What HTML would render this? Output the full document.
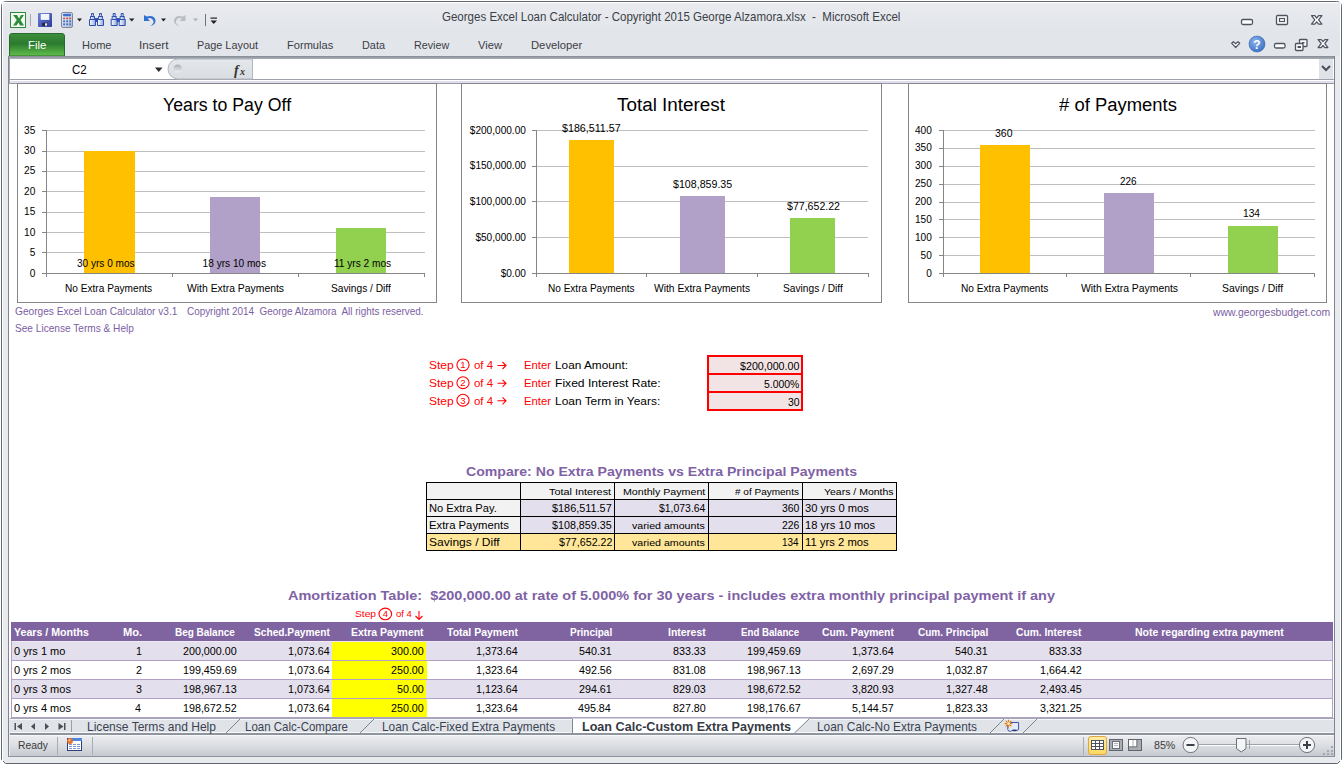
<!DOCTYPE html>
<html><head><meta charset="utf-8">
<style>
html,body{margin:0;padding:0;}
body{width:1343px;height:765px;overflow:hidden;position:relative;background:#ffffff;font-family:"Liberation Sans",sans-serif;}
.t{position:absolute;line-height:0;white-space:pre;transform-origin:0 0;}
svg{position:absolute;left:0;top:0;}
</style></head><body>
<svg width="1343" height="765" viewBox="0 0 1343 765">
<defs>
 <linearGradient id="gTitle" x1="0" y1="0" x2="0" y2="1"><stop offset="0" stop-color="#e9ebef"/><stop offset="1" stop-color="#e2e5ea"/></linearGradient>
 <linearGradient id="gFile" x1="0" y1="0" x2="0" y2="1"><stop offset="0" stop-color="#3f8f3f"/><stop offset="0.45" stop-color="#2b7a2e"/><stop offset="1" stop-color="#62bf4c"/></linearGradient>
 <linearGradient id="gRibB" x1="0" y1="0" x2="0" y2="1"><stop offset="0" stop-color="#868c96"/><stop offset="1" stop-color="#a9aeb5"/></linearGradient>
 <linearGradient id="gStatus" x1="0" y1="0" x2="0" y2="1"><stop offset="0" stop-color="#eceef1"/><stop offset="0.45" stop-color="#dde0e4"/><stop offset="1" stop-color="#c6cad0"/></linearGradient>
 <linearGradient id="gPill" x1="0" y1="0" x2="0" y2="1"><stop offset="0" stop-color="#e4e7eb"/><stop offset="1" stop-color="#d9dde2"/></linearGradient>
 <radialGradient id="gHelp" cx="0.4" cy="0.35" r="0.7"><stop offset="0" stop-color="#8db4ec"/><stop offset="1" stop-color="#3a6fc4"/></radialGradient>
</defs>
<!-- window frame -->
<path d="M1.5,759.5 V6.5 Q1.5,1.5 6.5,1.5 H1336.5 Q1341.5,1.5 1341.5,6.5 V759.5 L1337.5,763.5 H5.5 Z" fill="#e8eaee" stroke="#5f6773" stroke-width="1"/>
<rect x="2" y="2" width="1339" height="30" fill="url(#gTitle)"/>
<rect x="2" y="32" width="1339" height="24" fill="#e2e6ea"/>
<rect x="2" y="3" width="1" height="759" fill="#ffffff"/>
<rect x="1340" y="3" width="1" height="759" fill="#ffffff"/>
<line x1="3" y1="2.5" x2="1338" y2="2.5" stroke="#ffffff" stroke-width="1"/>
<!-- File tab -->
<path d="M9.5,56 L9.5,36 Q9.5,33.5 12,33.5 L62,33.5 Q64.5,33.5 64.5,36 L64.5,56 Z" fill="url(#gFile)" stroke="#2a6a2c" stroke-width="1"/>
<!-- client frame -->
<g shape-rendering="crispEdges">
<rect x="8" y="56" width="1327" height="3" fill="url(#gRibB)"/>
<rect x="8" y="56" width="1" height="701" fill="#7f8590"/>
<rect x="9" y="56" width="1" height="28" fill="#a4a9b0"/>
<rect x="1334" y="56" width="1" height="701" fill="#7f8590"/>
<rect x="10" y="59" width="1324" height="20" fill="#ffffff"/>
<rect x="10" y="79" width="1324" height="1" fill="#9ea3ab"/>
<rect x="10" y="80" width="1324" height="1" fill="#ffffff"/>
<rect x="11" y="81" width="1323" height="2" fill="#e1ddee"/>
<rect x="10" y="83" width="1324" height="1" fill="#979ca4"/>
<rect x="9" y="84" width="1325" height="634" fill="#ffffff"/>
</g>
<!-- formula bar pill -->
<path d="M252.5,59 L178,59 A10,10 0 0 0 178,79 L252.5,79 Z" fill="url(#gPill)" stroke="#b3b8bf" stroke-width="1"/>
<defs><linearGradient id="gDot" x1="0" y1="0" x2="0" y2="1"><stop offset="0" stop-color="#a9aeb5"/><stop offset="1" stop-color="#eef0f2"/></linearGradient></defs>
<circle cx="177.7" cy="68.5" r="4" fill="url(#gDot)"/>
<path d="M155,67.5 L162.5,67.5 L158.75,72 Z" fill="#2b2b2b"/>
<text x="234" y="74.5" font-family="Liberation Serif" font-style="italic" font-weight="bold" font-size="14" fill="#333">f</text>
<text x="240" y="74.5" font-family="Liberation Serif" font-style="italic" font-weight="bold" font-size="10" fill="#333">x</text>
<rect x="1319" y="59" width="14" height="20" fill="#dfe3e8" shape-rendering="crispEdges"/>
<path d="M1322,66 L1326,70 L1330,66" fill="none" stroke="#4a4f57" stroke-width="2"/>

<!-- quick access toolbar icons -->
<rect x="10.5" y="12.5" width="15" height="15" fill="#f4fbf2" stroke="#2f8a3a" stroke-width="1"/>
<path d="M13,15 L17,15 L19,18.5 L21,15 L24,15 L20.5,20 L24,25.5 L20,25.5 L18.5,22.5 L16.5,25.5 L13,25.5 L16.8,20 Z" fill="#2e8b3a"/>
<rect x="30" y="14" width="1" height="12" fill="#a6abb3"/>
<defs><linearGradient id="gFlop" x1="0" y1="0" x2="1" y2="1"><stop offset="0" stop-color="#6c82d8"/><stop offset="1" stop-color="#2f3a9a"/></linearGradient>
<linearGradient id="gCalc" x1="0" y1="0" x2="1" y2="1"><stop offset="0" stop-color="#f0f4fa"/><stop offset="1" stop-color="#aab8cc"/></linearGradient>
<linearGradient id="gBin" x1="0" y1="0" x2="1" y2="0"><stop offset="0" stop-color="#ffffff"/><stop offset="1" stop-color="#8fa8e0"/></linearGradient></defs>
<rect x="38" y="13" width="14" height="14" rx="0.8" fill="url(#gFlop)"/>
<rect x="40.7" y="13.9" width="8.6" height="6" fill="#f2f5fb"/>
<rect x="42.3" y="22.8" width="5.5" height="3.2" fill="#1e2440"/>
<rect x="45" y="23.3" width="2.2" height="2.4" fill="#e8ecf6"/>
<rect x="61.5" y="12.5" width="11" height="15" rx="1.6" fill="url(#gCalc)" stroke="#7d8799" stroke-width="1"/>
<rect x="63" y="13.8" width="8" height="2.4" rx="0.6" fill="#3f6fd0"/>
<g fill="#d94040"><rect x="63.2" y="17.6" width="1.8" height="1.6"/><rect x="66.2" y="17.6" width="1.8" height="1.6"/><rect x="69.2" y="17.6" width="1.8" height="1.6"/></g>
<g fill="#3f6fd0"><rect x="63.2" y="20.4" width="1.8" height="1.8"/><rect x="66.2" y="20.4" width="1.8" height="1.8"/><rect x="69.2" y="20.4" width="1.8" height="1.8"/><rect x="63.2" y="23.4" width="1.8" height="1.8"/><rect x="66.2" y="23.4" width="1.8" height="1.8"/><rect x="69.2" y="23.4" width="1.8" height="1.8"/></g>
<path d="M77,18.5 L82,18.5 L79.5,21.5 Z" fill="#222"/>
<g stroke="#2c4fb0" stroke-width="1" fill="url(#gBin)">
 <path d="M89.5,25.5 V19.5 L90.5,18.5 V16.5 L91.5,15.5 V13.5 H93.5 V15.5 L94.5,16.5 V18.5 L95.5,19.5 V25.5 Z"/>
 <path d="M97.5,25.5 V19.5 L98.5,18.5 V16.5 L99.5,15.5 V13.5 H101.5 V15.5 L102.5,16.5 V18.5 L103.5,19.5 V25.5 Z"/>
 <rect x="95.5" y="18.5" width="2" height="3" fill="#2c4fb0"/>
 <path d="M89.5,19.5 H95.5 M97.5,19.5 H103.5 M90.5,16.5 H94.5 M98.5,16.5 H102.5" fill="none"/>
</g>
<g transform="translate(21.7,0)" stroke="#2c4fb0" stroke-width="1" fill="url(#gBin)">
 <path d="M89.5,25.5 V19.5 L90.5,18.5 V16.5 L91.5,15.5 V13.5 H93.5 V15.5 L94.5,16.5 V18.5 L95.5,19.5 V25.5 Z"/>
 <path d="M97.5,25.5 V19.5 L98.5,18.5 V16.5 L99.5,15.5 V13.5 H101.5 V15.5 L102.5,16.5 V18.5 L103.5,19.5 V25.5 Z"/>
 <rect x="95.5" y="18.5" width="2" height="3" fill="#2c4fb0"/>
 <path d="M89.5,19.5 H95.5 M97.5,19.5 H103.5 M90.5,16.5 H94.5 M98.5,16.5 H102.5" fill="none"/>
</g>

<path d="M129,18.5 L134.5,18.5 L131.75,21.5 Z" fill="#222"/>
<path d="M144,15 L144,21 L150,21 L147.5,18.5 Q152,17 153.5,21 Q154,24 150,26 Q156,25 155.5,20 Q154,14.5 146.5,16.5 Z" fill="#2f6fd0"/>
<path d="M161,18.5 L166,18.5 L163.5,21.5 Z" fill="#222"/>
<path d="M185.5,15 L185.5,21 L179.5,21 L182,18.5 Q177.5,17 176,21 Q175.5,24 179.5,26 Q173.5,25 174,20 Q175.5,14.5 183,16.5 Z" fill="#b9bec5"/>
<path d="M193,18.5 L198,18.5 L195.5,21.5 Z" fill="#b0b4ba"/>
<rect x="205" y="14" width="1" height="12" fill="#6f747c"/>
<rect x="210.5" y="17.5" width="6.5" height="1.2" fill="#222"/>
<path d="M210.5,20.5 L217,20.5 L213.75,24 Z" fill="#222"/>

<!-- window buttons -->
<rect x="1241.5" y="19.5" width="11" height="5" rx="1.5" fill="#fff" stroke="#4e5561" stroke-width="1.3"/>
<rect x="1276.5" y="15.5" width="11" height="9" rx="1" fill="#fff" stroke="#4e5561" stroke-width="1.3"/>
<rect x="1279.5" y="18.5" width="5" height="3" fill="none" stroke="#4e5561" stroke-width="1.2"/>
<path transform="translate(1311.2,15.4)" d="M0.3,0.3 L3.6,0.3 L5.5,2.6 L7.4,0.3 L10.7,0.3 L7.4,4.5 L10.7,8.7 L7.4,8.7 L5.5,6.4 L3.6,8.7 L0.3,8.7 L3.6,4.5 Z" fill="#fff" stroke="#4e5561" stroke-width="1.25" stroke-linejoin="round"/>
<!-- ribbon right icons -->
<path transform="translate(1231.2,41.2)" d="M0.4,2 L2.2,0.4 L4.5,2.6 L6.8,0.4 L8.6,2 L4.5,6.3 Z" fill="#fff" stroke="#4e5561" stroke-width="1.2" stroke-linejoin="round"/>
<circle cx="1257" cy="44" r="8" fill="url(#gHelp)" stroke="#3a64b0" stroke-width="0.6"/>
<text x="1253.3" y="48.6" font-family="Liberation Sans" font-weight="bold" font-size="12" fill="#fff">?</text>
<rect x="1274.5" y="43.5" width="10.5" height="4.5" rx="1.5" fill="#fff" stroke="#4e5561" stroke-width="1.3"/>
<rect x="1299.5" y="39.5" width="7.5" height="7" rx="0.8" fill="#fff" stroke="#4e5561" stroke-width="1.3"/>
<rect x="1302" y="42" width="2.5" height="1.5" fill="#4e5561"/>
<rect x="1295.5" y="43.5" width="7.5" height="7" rx="0.8" fill="#fff" stroke="#4e5561" stroke-width="1.3"/>
<rect x="1297.5" y="46" width="3.5" height="2" fill="#4e5561"/>
<path transform="translate(1317.8,39.3)" d="M0.3,0.3 L3.4,0.3 L5.2,2.4 L7,0.3 L10.1,0.3 L7,4.2 L10.1,8.3 L7,8.3 L5.2,6.1 L3.4,8.3 L0.3,8.3 L3.4,4.2 Z" fill="#fff" stroke="#4e5561" stroke-width="1.25" stroke-linejoin="round"/>

<!-- ========== CHARTS ========== -->
<g shape-rendering="crispEdges">
<rect x="17.5" y="83.5" width="419" height="219" fill="#fff" stroke="#868686"/>
<rect x="461.5" y="83.5" width="420" height="219" fill="#fff" stroke="#868686"/>
<rect x="908.5" y="83.5" width="418" height="219" fill="#fff" stroke="#868686"/>
<g stroke="#bfbfbf" stroke-width="1">
 <path d="M46,130.5H425 M46,151.5H425 M46,171.5H425 M46,191.5H425 M46,212.5H425 M46,232.5H425 M46,252.5H425"/>
 <path d="M536,130.5H868 M536,166.5H868 M536,201.5H868 M536,237.5H868"/>
 <path d="M943,130.5H1315 M943,148.5H1315 M943,166.5H1315 M943,184.5H1315 M943,202.5H1315 M943,219.5H1315 M943,237.5H1315 M943,255.5H1315"/>
</g>
<!-- bars -->
<rect x="84" y="151" width="51" height="122" fill="#ffc000"/>
<rect x="210" y="197" width="50" height="76" fill="#b1a0c7"/>
<rect x="336" y="228" width="50" height="45" fill="#92d050"/>
<rect x="569" y="140" width="45" height="133" fill="#ffc000"/>
<rect x="680" y="196" width="45" height="77" fill="#b1a0c7"/>
<rect x="790" y="218" width="45" height="55" fill="#92d050"/>
<rect x="980" y="145" width="50" height="128" fill="#ffc000"/>
<rect x="1104" y="193" width="50" height="80" fill="#b1a0c7"/>
<rect x="1228" y="226" width="50" height="47" fill="#92d050"/>
<g stroke="#868686" stroke-width="1">
 <path d="M46.5,130V277 M42,273.5H424 M42,130.5H46 M42,151.5H46 M42,171.5H46 M42,191.5H46 M42,212.5H46 M42,232.5H46 M42,252.5H46 M172.5,273V277 M298.5,273V277 M424.5,273V277"/>
 <path d="M536.5,130V277 M532,273.5H868 M532,130.5H536 M532,166.5H536 M532,201.5H536 M532,237.5H536 M646.5,273V277 M757.5,273V277 M868.5,273V277"/>
 <path d="M943.5,130V277 M939,273.5H1315 M939,130.5H943 M939,148.5H943 M939,166.5H943 M939,184.5H943 M939,202.5H943 M939,219.5H943 M939,237.5H943 M939,255.5H943 M1066.5,273V277 M1190.5,273V277 M1314.5,273V277"/>
</g>
</g>

<!-- ========== INPUT BOXES ========== -->
<g shape-rendering="crispEdges">
<rect x="707" y="355" width="96" height="56" fill="#ff0000"/>
<rect x="709" y="357" width="92" height="16" fill="#f2e4e4"/>
<rect x="709" y="375" width="92" height="16" fill="#f2e4e4"/>
<rect x="709" y="393" width="92" height="16" fill="#f2e4e4"/>
</g>
<!-- circled step numbers and arrows -->
<g fill="none" stroke="#ff0000" stroke-width="1.1">
 <ellipse cx="463" cy="364.9" rx="6.1" ry="5.9"/>
 <ellipse cx="463" cy="382.7" rx="6.1" ry="5.9"/>
 <ellipse cx="463" cy="400.2" rx="6.1" ry="5.9"/>
 <ellipse cx="385.3" cy="613.9" rx="6.3" ry="5.8"/>
 <path d="M497.5,365.5H506 M502.5,362L506,365.5L502.5,369"/>
 <path d="M497.5,383.3H506 M502.5,379.8L506,383.3L502.5,386.8"/>
 <path d="M497.5,400.8H506 M502.5,397.3L506,400.8L502.5,404.3"/>
 <path d="M419,611V619.5 M415.5,616L419,619.5L422.5,616"/>
</g>
<g font-family="Liberation Sans" font-size="9.6" fill="#ff0000" text-anchor="middle">
 <text x="463" y="368.4">1</text><text x="463" y="386.2">2</text><text x="463" y="403.7">3</text><text x="385.3" y="617.4">4</text>
</g>

<!-- ========== COMPARE TABLE ========== -->
<g shape-rendering="crispEdges">
<rect x="426" y="482" width="471" height="69" fill="#000"/>
<rect x="427" y="483" width="469" height="16" fill="#f2f2f2"/>
<rect x="427" y="500" width="93" height="16" fill="#f2f2f2"/>
<rect x="427" y="517" width="93" height="16" fill="#f2f2f2"/>
<rect x="521" y="500" width="375" height="16" fill="#e4dfec"/>
<rect x="521" y="517" width="375" height="16" fill="#e4dfec"/>
<rect x="427" y="534" width="469" height="16" fill="#ffe699"/>
<g fill="#000"><rect x="520" y="482" width="1" height="69"/><rect x="614" y="482" width="1" height="69"/><rect x="708" y="482" width="1" height="69"/><rect x="802" y="482" width="1" height="69"/></g>
</g>

<!-- ========== AMORTIZATION TABLE ========== -->
<g shape-rendering="crispEdges">
<rect x="11" y="622" width="1322" height="19" fill="#8064a2"/>
<rect x="11" y="641" width="1322" height="77" fill="#b1a0c7"/>
<rect x="12" y="641" width="1320" height="1" fill="#efebf4"/>
<rect x="12" y="642" width="1320" height="18" fill="#e4dfec"/>
<rect x="12" y="661" width="1320" height="18" fill="#ffffff"/>
<rect x="12" y="680" width="1320" height="18" fill="#e4dfec"/>
<rect x="12" y="699" width="1320" height="18" fill="#ffffff"/>
<rect x="332" y="642" width="94" height="18" fill="#ffff00"/>
<rect x="332" y="661" width="95" height="18" fill="#ffff00"/>
<rect x="332" y="680" width="94" height="18" fill="#ffff00"/>
<rect x="332" y="699" width="95" height="18" fill="#ffff00"/>
</g>

<!-- ========== SHEET TABS ========== -->
<g shape-rendering="crispEdges">
<rect x="10" y="718" width="1324" height="1" fill="#a3a9b1"/>
<rect x="10" y="719" width="1324" height="14" fill="#e0e4e9"/>
<rect x="10" y="733" width="1324" height="2" fill="#8f959e"/>
<rect x="71" y="719" width="1" height="14" fill="#9aa0a8"/>
<rect x="10" y="719" width="1324" height="1" fill="#f6f7f9"/>
<rect x="10" y="732" width="1324" height="1" fill="#f6f7f9"/>
</g>
<path d="M572.5,733 L572.5,718.5 L809,718.5 L794.5,733 Z" fill="#ffffff"/>
<g stroke="#7f858e" stroke-width="1" fill="none">
 <path d="M226,733 L240,719"/><path d="M360,733 L374,719"/><path d="M572.5,733 L572.5,719"/><path d="M794.5,733 L809,719"/><path d="M990,733 L1004,719"/><path d="M1023,733 L1037,719"/>
</g>
<g fill="#4a5059">
 <rect x="14.5" y="723" width="1.5" height="7"/><path d="M22,723 L17,726.5 L22,730 Z"/>
 <path d="M35,723 L31,726.5 L35,730 Z"/>
 <path d="M45,723 L49,726.5 L45,730 Z"/>
 <path d="M58.5,723 L63.5,726.5 L58.5,730 Z"/><rect x="64" y="723" width="1.5" height="7"/>
</g>
<!-- insert sheet icon -->
<path d="M1007.8,724 V729.5 Q1008.2,731.4 1010.5,731.4 Q1011.8,731.2 1012.3,730.2 H1015.5 Q1017,730.8 1018.6,729.6 V722.5 H1010.5" fill="#e4eaf8" stroke="#3c56a6" stroke-width="1"/>
<path d="M1012.5,730.5 H1016.5" stroke="#27336e" stroke-width="1.4"/>
<g stroke="#e67c12" stroke-width="1.1" stroke-linecap="round"><path d="M1008.5,720 V727.2 M1005,723.6 H1012 M1006,721.1 L1011,726.1 M1011,721.1 L1006,726.1"/></g>
<circle cx="1008.5" cy="723.6" r="1.3" fill="#fff6d8"/>

<!-- ========== STATUS BAR ========== -->
<rect x="10" y="735" width="1324" height="21" fill="url(#gStatus)"/>
<rect x="8" y="756" width="1327" height="1" fill="#8d939c"/>
<g shape-rendering="crispEdges" fill="#a8adb4">
 <rect x="57" y="737" width="1" height="18"/><rect x="92" y="737" width="1" height="18"/><rect x="1083" y="737" width="1" height="18"/>
</g>
<rect x="67.5" y="738.5" width="14" height="12" fill="#ffffff" stroke="#2f3c78" stroke-width="1"/>
<rect x="68" y="738" width="14" height="3" fill="#4f86e0"/>
<g fill="#7f97d2"><rect x="69" y="744" width="3" height="1"/><rect x="73" y="744" width="3" height="1"/><rect x="77" y="744" width="3" height="1"/><rect x="69" y="746" width="3" height="1"/><rect x="73" y="746" width="3" height="1"/><rect x="77" y="746" width="3" height="1"/><rect x="69" y="748" width="3" height="1"/><rect x="73" y="748" width="3" height="1"/><rect x="77" y="748" width="3" height="1"/></g>
<circle cx="70" cy="741" r="2.9" fill="#e8702a"/>
<circle cx="69.3" cy="740.2" r="1.2" fill="#f6b27a"/>
<rect x="10" y="735" width="1324" height="1" fill="#f7f8fa"/>
<!-- view buttons -->
<defs><linearGradient id="gNorm" x1="0" y1="0" x2="0" y2="1"><stop offset="0" stop-color="#fdeea8"/><stop offset="1" stop-color="#fbd75e"/></linearGradient></defs>
<rect x="1088.5" y="736.5" width="18" height="18" rx="2.5" fill="url(#gNorm)" stroke="#e0a640" stroke-width="1"/>
<rect x="1091" y="740" width="13" height="10" fill="#4f535b"/>
<g fill="#ffffff"><rect x="1092" y="741" width="3" height="2"/><rect x="1096" y="741" width="3" height="2"/><rect x="1100" y="741" width="3" height="2"/><rect x="1092" y="744" width="3" height="2"/><rect x="1096" y="744" width="3" height="2"/><rect x="1100" y="744" width="3" height="2"/><rect x="1092" y="747" width="3" height="2"/><rect x="1096" y="747" width="3" height="2"/><rect x="1100" y="747" width="3" height="2"/></g>
<rect x="1109.5" y="739.5" width="13" height="11" fill="#a9adb4" stroke="#60656d" stroke-width="1"/>
<rect x="1112.5" y="741.5" width="7" height="7" fill="#f8f8f8" stroke="#6a6f77" stroke-width="1"/>
<g fill="#a0a4ab"><rect x="1114" y="743" width="4" height="0.8"/><rect x="1114" y="745" width="4" height="0.8"/></g>
<rect x="1128.5" y="739.5" width="13" height="11" fill="#a9adb4" stroke="#60656d" stroke-width="1"/>
<rect x="1129" y="740" width="3.5" height="6.5" fill="#ffffff"/>
<rect x="1133.5" y="740" width="3" height="6.5" fill="#ffffff"/>
<rect x="1136.5" y="740" width="0.8" height="6.5" fill="#60656d"/>
<rect x="1129" y="746.5" width="8.3" height="0.8" fill="#60656d"/>
<!-- zoom slider -->
<rect x="1199" y="744" width="100" height="1" fill="#9ea3aa"/>
<rect x="1199" y="745" width="100" height="1" fill="#ffffff"/>
<circle cx="1190.6" cy="745" r="7.6" fill="#f4f5f7" stroke="#6f747c" stroke-width="1"/>
<rect x="1186.5" y="744" width="8" height="2" fill="#3c4048"/>
<circle cx="1307" cy="745" r="7.6" fill="#f4f5f7" stroke="#6f747c" stroke-width="1"/>
<rect x="1303" y="744" width="8" height="2" fill="#3c4048"/><rect x="1306" y="741" width="2" height="8" fill="#3c4048"/>
<path d="M1236.5,738.5 L1246,738.5 L1246,748.5 L1241.25,752 L1236.5,748.5 Z" fill="#f4f5f7" stroke="#6a6f77" stroke-width="1"/>
<rect x="1249" y="740" width="1" height="9" fill="#a0a5ac"/>
<g fill="#a3a8af"><rect x="1331" y="746" width="2" height="2"/><rect x="1327" y="750" width="2" height="2"/><rect x="1331" y="750" width="2" height="2"/><rect x="1323" y="753" width="2" height="2"/><rect x="1327" y="753" width="2" height="2"/><rect x="1331" y="753" width="2" height="2"/></g>
</svg>
<span class="t" style="left:442.30px;top:16.93px;font-size:12.6px;color:#3b3f47;transform:scaleX(0.9147);">Georges Excel Loan Calculator - Copyright 2015 George Alzamora.xlsx  -  Microsoft Excel</span>
<span class="t" style="left:28.30px;top:45.25px;font-size:11.4px;color:#ffffff;transform:scaleX(0.9934);">File</span>
<span class="t" style="left:82.30px;top:44.98px;font-size:11.6px;color:#3c3c46;transform:scaleX(0.9548);">Home</span>
<span class="t" style="left:138.69px;top:44.98px;font-size:11.6px;color:#3c3c46;transform:scaleX(1.0148);">Insert</span>
<span class="t" style="left:197.00px;top:44.98px;font-size:11.6px;color:#3c3c46;transform:scaleX(0.9365);">Page Layout</span>
<span class="t" style="left:287.30px;top:44.98px;font-size:11.6px;color:#3c3c46;transform:scaleX(0.9563);">Formulas</span>
<span class="t" style="left:362.30px;top:44.98px;font-size:11.6px;color:#3c3c46;transform:scaleX(0.9384);">Data</span>
<span class="t" style="left:414.20px;top:44.98px;font-size:11.6px;color:#3c3c46;transform:scaleX(0.9239);">Review</span>
<span class="t" style="left:478.20px;top:44.98px;font-size:11.6px;color:#3c3c46;transform:scaleX(0.9629);">View</span>
<span class="t" style="left:531.40px;top:44.98px;font-size:11.6px;color:#3c3c46;transform:scaleX(0.9701);">Developer</span>
<span class="t" style="left:72.20px;top:69.80px;font-size:12.4px;color:#000;transform:scaleX(0.9280);">C2</span>
<span class="t" style="left:163.30px;top:105.49px;font-size:18.8px;color:#000;transform:scaleX(0.9436);">Years to Pay Off</span>
<span class="t" style="left:617.30px;top:105.49px;font-size:18.8px;color:#000;transform:scaleX(1.0046);">Total Interest</span>
<span class="t" style="left:1059.00px;top:105.49px;font-size:18.8px;color:#000;transform:scaleX(0.9819);"># of Payments</span>
<span class="t" style="left:29.70px;top:273.50px;font-size:10.1px;color:#000;">0</span>
<span class="t" style="left:29.70px;top:253.09px;font-size:10.1px;color:#000;">5</span>
<span class="t" style="left:24.09px;top:232.67px;font-size:10.1px;color:#000;">10</span>
<span class="t" style="left:24.09px;top:212.26px;font-size:10.1px;color:#000;">15</span>
<span class="t" style="left:24.09px;top:191.84px;font-size:10.1px;color:#000;">20</span>
<span class="t" style="left:24.09px;top:171.43px;font-size:10.1px;color:#000;">25</span>
<span class="t" style="left:24.09px;top:151.01px;font-size:10.1px;color:#000;">30</span>
<span class="t" style="left:24.09px;top:130.60px;font-size:10.1px;color:#000;">35</span>
<span class="t" style="left:500.65px;top:273.50px;font-size:10.1px;color:#000;">$0.00</span>
<span class="t" style="left:475.40px;top:237.78px;font-size:10.1px;color:#000;">$50,000.00</span>
<span class="t" style="left:469.78px;top:202.05px;font-size:10.1px;color:#000;">$100,000.00</span>
<span class="t" style="left:469.78px;top:166.33px;font-size:10.1px;color:#000;">$150,000.00</span>
<span class="t" style="left:469.78px;top:130.60px;font-size:10.1px;color:#000;">$200,000.00</span>
<span class="t" style="left:926.20px;top:273.50px;font-size:10.1px;color:#000;">0</span>
<span class="t" style="left:920.59px;top:255.64px;font-size:10.1px;color:#000;">50</span>
<span class="t" style="left:914.97px;top:237.78px;font-size:10.1px;color:#000;">100</span>
<span class="t" style="left:914.97px;top:219.91px;font-size:10.1px;color:#000;">150</span>
<span class="t" style="left:914.97px;top:202.05px;font-size:10.1px;color:#000;">200</span>
<span class="t" style="left:914.97px;top:184.19px;font-size:10.1px;color:#000;">250</span>
<span class="t" style="left:914.97px;top:166.33px;font-size:10.1px;color:#000;">300</span>
<span class="t" style="left:914.97px;top:148.46px;font-size:10.1px;color:#000;">350</span>
<span class="t" style="left:914.97px;top:130.60px;font-size:10.1px;color:#000;">400</span>
<span class="t" style="left:65.45px;top:288.50px;font-size:10.1px;color:#000;transform:scaleX(1.0023);">No Extra Payments</span>
<span class="t" style="left:186.50px;top:288.50px;font-size:10.1px;color:#000;transform:scaleX(1.0299);">With Extra Payments</span>
<span class="t" style="left:331.00px;top:288.50px;font-size:10.1px;color:#000;transform:scaleX(1.0088);">Savings / Diff</span>
<span class="t" style="left:548.09px;top:288.50px;font-size:10.1px;color:#000;transform:scaleX(0.9954);">No Extra Payments</span>
<span class="t" style="left:654.00px;top:288.50px;font-size:10.1px;color:#000;transform:scaleX(1.0192);">With Extra Payments</span>
<span class="t" style="left:782.67px;top:288.50px;font-size:10.1px;color:#000;transform:scaleX(1.0088);">Savings / Diff</span>
<span class="t" style="left:961.35px;top:288.50px;font-size:10.1px;color:#000;transform:scaleX(1.0046);">No Extra Payments</span>
<span class="t" style="left:1080.50px;top:288.50px;font-size:10.1px;color:#000;transform:scaleX(1.0299);">With Extra Payments</span>
<span class="t" style="left:1222.35px;top:288.50px;font-size:10.1px;color:#000;transform:scaleX(1.0307);">Savings / Diff</span>
<span class="t" style="left:77.30px;top:263.50px;font-size:10.1px;color:#000;transform:scaleX(0.9960);">30 yrs 0 mos</span>
<span class="t" style="left:202.60px;top:263.50px;font-size:10.1px;color:#000;">18 yrs 10 mos</span>
<span class="t" style="left:333.60px;top:263.50px;font-size:10.1px;color:#000;transform:scaleX(1.0021);">11 yrs 2 mos</span>
<span class="t" style="left:562.10px;top:129.00px;font-size:10.1px;color:#000;transform:scaleX(1.0579);">$186,511.57</span>
<span class="t" style="left:672.70px;top:184.90px;font-size:10.1px;color:#000;transform:scaleX(1.0545);">$108,859.35</span>
<span class="t" style="left:787.00px;top:207.40px;font-size:10.1px;color:#000;transform:scaleX(1.0490);">$77,652.22</span>
<span class="t" style="left:995.10px;top:133.50px;font-size:10.1px;color:#000;transform:scaleX(1.0390);">360</span>
<span class="t" style="left:1119.60px;top:181.60px;font-size:10.1px;color:#000;transform:scaleX(0.9810);">226</span>
<span class="t" style="left:1243.40px;top:214.30px;font-size:10.1px;color:#000;transform:scaleX(1.0100);">134</span>
<span class="t" style="left:14.90px;top:311.15px;font-size:11.4px;color:#7b5ea3;transform:scaleX(0.8906);">Georges Excel Loan Calculator v3.1</span>
<span class="t" style="left:186.60px;top:311.15px;font-size:11.4px;color:#7b5ea3;transform:scaleX(0.8685);">Copyright 2014  George Alzamora  All rights reserved.</span>
<span class="t" style="left:14.90px;top:328.05px;font-size:11.4px;color:#7b5ea3;transform:scaleX(0.8873);">See License Terms &amp; Help</span>
<span class="t" style="left:1213.32px;top:312.05px;font-size:11.4px;color:#7b5ea3;transform:scaleX(0.9158);">www.georgesbudget.com</span>
<span class="t" style="left:429.30px;top:365.38px;font-size:11.6px;color:#ff0000;transform:scaleX(1.0341);">Step</span>
<span class="t" style="left:474.00px;top:365.38px;font-size:11.6px;color:#ff0000;transform:scaleX(0.9854);">of 4</span>
<span class="t" style="left:523.60px;top:365.38px;font-size:11.6px;color:#ff0000;transform:scaleX(0.9731);">Enter</span>
<span class="t" style="left:554.60px;top:365.38px;font-size:11.6px;color:#000;transform:scaleX(1.0199);">Loan Amount:</span>
<span class="t" style="left:429.30px;top:383.18px;font-size:11.6px;color:#ff0000;transform:scaleX(1.0341);">Step</span>
<span class="t" style="left:474.00px;top:383.18px;font-size:11.6px;color:#ff0000;transform:scaleX(0.9854);">of 4</span>
<span class="t" style="left:523.60px;top:383.18px;font-size:11.6px;color:#ff0000;transform:scaleX(0.9731);">Enter</span>
<span class="t" style="left:554.60px;top:383.18px;font-size:11.6px;color:#000;transform:scaleX(1.0441);">Fixed Interest Rate:</span>
<span class="t" style="left:429.30px;top:400.68px;font-size:11.6px;color:#ff0000;transform:scaleX(1.0341);">Step</span>
<span class="t" style="left:474.00px;top:400.68px;font-size:11.6px;color:#ff0000;transform:scaleX(0.9854);">of 4</span>
<span class="t" style="left:523.60px;top:400.68px;font-size:11.6px;color:#ff0000;transform:scaleX(0.9731);">Enter</span>
<span class="t" style="left:554.60px;top:400.68px;font-size:11.6px;color:#000;transform:scaleX(1.0287);">Loan Term in Years:</span>
<span class="t" style="left:740.40px;top:365.98px;font-size:11.6px;color:#000;transform:scaleX(0.9215);">$200,000.00</span>
<span class="t" style="left:764.29px;top:383.98px;font-size:11.6px;color:#000;transform:scaleX(0.9000);">5.000%</span>
<span class="t" style="left:788.20px;top:401.98px;font-size:11.6px;color:#000;transform:scaleX(0.9000);">30</span>
<span class="t" style="left:466.30px;top:471.76px;font-size:13.4px;color:#7f62a6;font-weight:700;transform:scaleX(1.0528);">Compare: No Extra Payments vs Extra Principal Payments</span>
<span class="t" style="left:548.60px;top:491.81px;font-size:9.5px;color:#000;transform:scaleX(1.1416);">Total Interest</span>
<span class="t" style="left:623.30px;top:491.81px;font-size:9.5px;color:#000;transform:scaleX(1.1213);">Monthly Payment</span>
<span class="t" style="left:735.00px;top:491.81px;font-size:9.5px;color:#000;transform:scaleX(1.0529);"># of Payments</span>
<span class="t" style="left:824.00px;top:491.81px;font-size:9.5px;color:#000;transform:scaleX(1.1033);">Years / Months</span>
<span class="t" style="left:429.30px;top:507.58px;font-size:11.6px;color:#000;transform:scaleX(0.9583);">No Extra Pay.</span>
<span class="t" style="left:552.20px;top:507.58px;font-size:11.6px;color:#000;transform:scaleX(0.9388);">$186,511.57</span>
<span class="t" style="left:658.70px;top:507.58px;font-size:11.6px;color:#000;transform:scaleX(0.8997);">$1,073.64</span>
<span class="t" style="left:782.40px;top:507.58px;font-size:11.6px;color:#000;transform:scaleX(0.8997);">360</span>
<span class="t" style="left:805.10px;top:507.58px;font-size:11.6px;color:#000;transform:scaleX(0.9614);">30 yrs 0 mos</span>
<span class="t" style="left:429.30px;top:524.58px;font-size:11.6px;color:#000;transform:scaleX(0.9764);">Extra Payments</span>
<span class="t" style="left:552.20px;top:524.58px;font-size:11.6px;color:#000;transform:scaleX(0.9262);">$108,859.35</span>
<span class="t" style="left:632.30px;top:525.98px;font-size:9.0px;color:#000;transform:scaleX(1.1816);">varied amounts</span>
<span class="t" style="left:782.40px;top:524.58px;font-size:11.6px;color:#000;transform:scaleX(0.8997);">226</span>
<span class="t" style="left:805.10px;top:524.58px;font-size:11.6px;color:#000;transform:scaleX(0.9614);">18 yrs 10 mos</span>
<span class="t" style="left:429.30px;top:541.58px;font-size:11.6px;color:#000;transform:scaleX(1.0382);">Savings / Diff</span>
<span class="t" style="left:558.50px;top:541.58px;font-size:11.6px;color:#000;transform:scaleX(0.9205);">$77,652.22</span>
<span class="t" style="left:632.30px;top:542.98px;font-size:9.0px;color:#000;transform:scaleX(1.1816);">varied amounts</span>
<span class="t" style="left:782.40px;top:541.58px;font-size:11.6px;color:#000;transform:scaleX(0.8545);">134</span>
<span class="t" style="left:805.10px;top:541.58px;font-size:11.6px;color:#000;transform:scaleX(0.9725);">11 yrs 2 mos</span>
<span class="t" style="left:288.30px;top:596.06px;font-size:13.4px;color:#7f62a6;font-weight:700;transform:scaleX(1.0819);">Amortization Table:  $200,000.00 at rate of 5.000% for 30 years - includes extra monthly principal payment if any</span>
<span class="t" style="left:354.90px;top:614.47px;font-size:9.6px;color:#ff0000;transform:scaleX(1.0619);">Step</span>
<span class="t" style="left:395.50px;top:614.47px;font-size:9.6px;color:#ff0000;transform:scaleX(0.9900);">of 4</span>
<span class="t" style="left:14.40px;top:631.58px;font-size:11.6px;color:#ffffff;font-weight:700;transform:scaleX(0.9167);">Years / Months</span>
<span class="t" style="left:123.00px;top:631.58px;font-size:11.6px;color:#ffffff;font-weight:700;transform:scaleX(0.9625);">Mo.</span>
<span class="t" style="left:175.30px;top:631.58px;font-size:11.6px;color:#ffffff;font-weight:700;transform:scaleX(0.8597);">Beg Balance</span>
<span class="t" style="left:254.00px;top:631.58px;font-size:11.6px;color:#ffffff;font-weight:700;transform:scaleX(0.8777);">Sched.Payment</span>
<span class="t" style="left:351.00px;top:631.58px;font-size:11.6px;color:#ffffff;font-weight:700;transform:scaleX(0.9010);">Extra Payment</span>
<span class="t" style="left:446.70px;top:631.58px;font-size:11.6px;color:#ffffff;font-weight:700;transform:scaleX(0.9042);">Total Payment</span>
<span class="t" style="left:570.00px;top:631.58px;font-size:11.6px;color:#ffffff;font-weight:700;transform:scaleX(0.8616);">Principal</span>
<span class="t" style="left:667.90px;top:631.58px;font-size:11.6px;color:#ffffff;font-weight:700;transform:scaleX(0.8996);">Interest</span>
<span class="t" style="left:741.00px;top:631.58px;font-size:11.6px;color:#ffffff;font-weight:700;transform:scaleX(0.8355);">End Balance</span>
<span class="t" style="left:822.00px;top:631.58px;font-size:11.6px;color:#ffffff;font-weight:700;transform:scaleX(0.8925);">Cum. Payment</span>
<span class="t" style="left:918.00px;top:631.58px;font-size:11.6px;color:#ffffff;font-weight:700;transform:scaleX(0.8647);">Cum. Principal</span>
<span class="t" style="left:1016.20px;top:631.58px;font-size:11.6px;color:#ffffff;font-weight:700;transform:scaleX(0.8825);">Cum. Interest</span>
<span class="t" style="left:1134.50px;top:631.58px;font-size:11.6px;color:#ffffff;font-weight:700;transform:scaleX(0.9056);">Note regarding extra payment</span>
<span class="t" style="left:14.40px;top:651.48px;font-size:11.6px;color:#000;transform:scaleX(0.9500);">0 yrs 1 mo</span>
<span class="t" style="left:136.25px;top:651.48px;font-size:11.6px;color:#000;transform:scaleX(0.9250);">1</span>
<span class="t" style="left:182.54px;top:651.48px;font-size:11.6px;color:#000;transform:scaleX(0.9250);">200,000.00</span>
<span class="t" style="left:287.54px;top:651.48px;font-size:11.6px;color:#000;transform:scaleX(0.9250);">1,073.64</span>
<span class="t" style="left:391.41px;top:651.48px;font-size:11.6px;color:#000;transform:scaleX(0.9250);">300.00</span>
<span class="t" style="left:475.54px;top:651.48px;font-size:11.6px;color:#000;transform:scaleX(0.9250);">1,373.64</span>
<span class="t" style="left:579.41px;top:651.48px;font-size:11.6px;color:#000;transform:scaleX(0.9250);">540.31</span>
<span class="t" style="left:673.41px;top:651.48px;font-size:11.6px;color:#000;transform:scaleX(0.9250);">833.33</span>
<span class="t" style="left:746.54px;top:651.48px;font-size:11.6px;color:#000;transform:scaleX(0.9250);">199,459.69</span>
<span class="t" style="left:851.54px;top:651.48px;font-size:11.6px;color:#000;transform:scaleX(0.9250);">1,373.64</span>
<span class="t" style="left:955.41px;top:651.48px;font-size:11.6px;color:#000;transform:scaleX(0.9250);">540.31</span>
<span class="t" style="left:1049.41px;top:651.48px;font-size:11.6px;color:#000;transform:scaleX(0.9250);">833.33</span>
<span class="t" style="left:14.40px;top:670.48px;font-size:11.6px;color:#000;transform:scaleX(0.9500);">0 yrs 2 mos</span>
<span class="t" style="left:136.25px;top:670.48px;font-size:11.6px;color:#000;transform:scaleX(0.9250);">2</span>
<span class="t" style="left:182.54px;top:670.48px;font-size:11.6px;color:#000;transform:scaleX(0.9250);">199,459.69</span>
<span class="t" style="left:287.54px;top:670.48px;font-size:11.6px;color:#000;transform:scaleX(0.9250);">1,073.64</span>
<span class="t" style="left:391.41px;top:670.48px;font-size:11.6px;color:#000;transform:scaleX(0.9250);">250.00</span>
<span class="t" style="left:475.54px;top:670.48px;font-size:11.6px;color:#000;transform:scaleX(0.9250);">1,323.64</span>
<span class="t" style="left:579.41px;top:670.48px;font-size:11.6px;color:#000;transform:scaleX(0.9250);">492.56</span>
<span class="t" style="left:673.41px;top:670.48px;font-size:11.6px;color:#000;transform:scaleX(0.9250);">831.08</span>
<span class="t" style="left:746.54px;top:670.48px;font-size:11.6px;color:#000;transform:scaleX(0.9250);">198,967.13</span>
<span class="t" style="left:852.47px;top:670.48px;font-size:11.6px;color:#000;transform:scaleX(0.9250);">2,697.29</span>
<span class="t" style="left:946.47px;top:670.48px;font-size:11.6px;color:#000;transform:scaleX(0.9250);">1,032.87</span>
<span class="t" style="left:1040.47px;top:670.48px;font-size:11.6px;color:#000;transform:scaleX(0.9250);">1,664.42</span>
<span class="t" style="left:14.40px;top:689.48px;font-size:11.6px;color:#000;transform:scaleX(0.9500);">0 yrs 3 mos</span>
<span class="t" style="left:136.25px;top:689.48px;font-size:11.6px;color:#000;transform:scaleX(0.9250);">3</span>
<span class="t" style="left:182.54px;top:689.48px;font-size:11.6px;color:#000;transform:scaleX(0.9250);">198,967.13</span>
<span class="t" style="left:287.54px;top:689.48px;font-size:11.6px;color:#000;transform:scaleX(0.9250);">1,073.64</span>
<span class="t" style="left:397.38px;top:689.48px;font-size:11.6px;color:#000;transform:scaleX(0.9250);">50.00</span>
<span class="t" style="left:475.54px;top:689.48px;font-size:11.6px;color:#000;transform:scaleX(0.9250);">1,123.64</span>
<span class="t" style="left:579.41px;top:689.48px;font-size:11.6px;color:#000;transform:scaleX(0.9250);">294.61</span>
<span class="t" style="left:673.41px;top:689.48px;font-size:11.6px;color:#000;transform:scaleX(0.9250);">829.03</span>
<span class="t" style="left:746.54px;top:689.48px;font-size:11.6px;color:#000;transform:scaleX(0.9250);">198,672.52</span>
<span class="t" style="left:852.47px;top:689.48px;font-size:11.6px;color:#000;transform:scaleX(0.9250);">3,820.93</span>
<span class="t" style="left:946.47px;top:689.48px;font-size:11.6px;color:#000;transform:scaleX(0.9250);">1,327.48</span>
<span class="t" style="left:1040.47px;top:689.48px;font-size:11.6px;color:#000;transform:scaleX(0.9250);">2,493.45</span>
<span class="t" style="left:14.40px;top:708.48px;font-size:11.6px;color:#000;transform:scaleX(0.9500);">0 yrs 4 mos</span>
<span class="t" style="left:135.33px;top:708.48px;font-size:11.6px;color:#000;transform:scaleX(0.9250);">4</span>
<span class="t" style="left:182.54px;top:708.48px;font-size:11.6px;color:#000;transform:scaleX(0.9250);">198,672.52</span>
<span class="t" style="left:287.54px;top:708.48px;font-size:11.6px;color:#000;transform:scaleX(0.9250);">1,073.64</span>
<span class="t" style="left:391.41px;top:708.48px;font-size:11.6px;color:#000;transform:scaleX(0.9250);">250.00</span>
<span class="t" style="left:475.54px;top:708.48px;font-size:11.6px;color:#000;transform:scaleX(0.9250);">1,323.64</span>
<span class="t" style="left:578.49px;top:708.48px;font-size:11.6px;color:#000;transform:scaleX(0.9250);">495.84</span>
<span class="t" style="left:673.41px;top:708.48px;font-size:11.6px;color:#000;transform:scaleX(0.9250);">827.80</span>
<span class="t" style="left:746.54px;top:708.48px;font-size:11.6px;color:#000;transform:scaleX(0.9250);">198,176.67</span>
<span class="t" style="left:852.47px;top:708.48px;font-size:11.6px;color:#000;transform:scaleX(0.9250);">5,144.57</span>
<span class="t" style="left:946.47px;top:708.48px;font-size:11.6px;color:#000;transform:scaleX(0.9250);">1,823.33</span>
<span class="t" style="left:1040.47px;top:708.48px;font-size:11.6px;color:#000;transform:scaleX(0.9250);">3,321.25</span>
<span class="t" style="left:86.61px;top:726.57px;font-size:12.2px;color:#3b4251;transform:scaleX(0.9880);">License Terms and Help</span>
<span class="t" style="left:245.06px;top:726.57px;font-size:12.2px;color:#3b4251;transform:scaleX(0.9438);">Loan Calc-Compare</span>
<span class="t" style="left:382.03px;top:726.57px;font-size:12.2px;color:#3b4251;transform:scaleX(0.9715);">Loan Calc-Fixed Extra Payments</span>
<span class="t" style="left:582.30px;top:726.57px;font-size:12.2px;color:#353a45;font-weight:700;transform:scaleX(1.0324);">Loan Calc-Custom Extra Payments</span>
<span class="t" style="left:817.02px;top:726.57px;font-size:12.2px;color:#3b4251;transform:scaleX(0.9765);">Loan Calc-No Extra Payments</span>
<span class="t" style="left:18.00px;top:745.08px;font-size:11.3px;color:#3b3b3b;transform:scaleX(0.9150);">Ready</span>
<span class="t" style="left:1153.70px;top:745.08px;font-size:11.3px;color:#3b3b3b;transform:scaleX(0.9439);">85%</span>
</body></html>
